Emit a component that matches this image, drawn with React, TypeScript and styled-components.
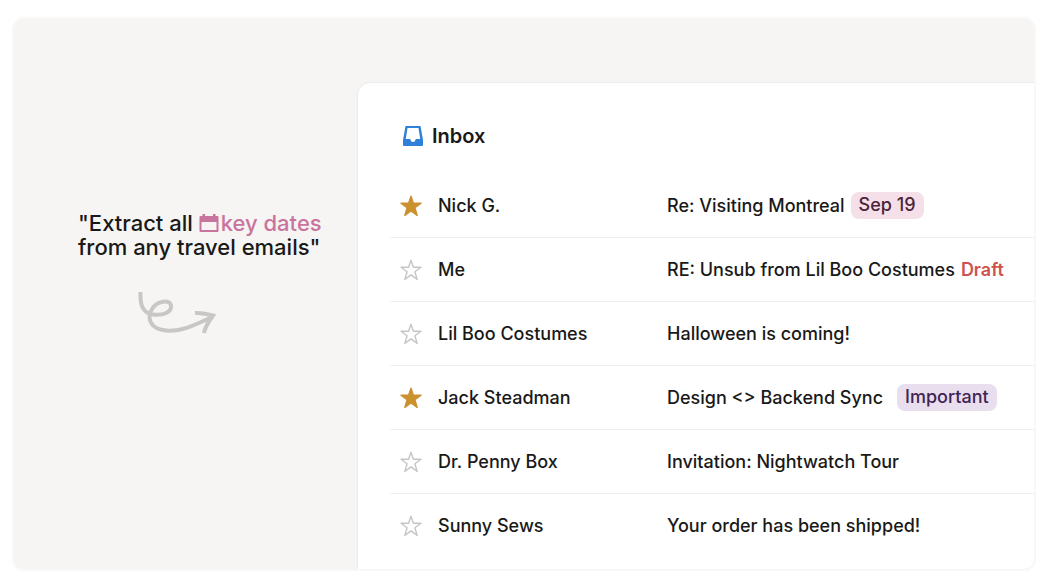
import React, { useState } from "react";
import styled, { createGlobalStyle } from "styled-components";

const GlobalStyle = createGlobalStyle`
  * { box-sizing: border-box; }
  body {
    margin: 0;
    background: #fff;
    color: #191918;
    font-family: Inter, "Liberation Sans", sans-serif;
  }
`;

const Page = styled.main`
  padding: 17px 14px 15px 12px;
`;

const Stage = styled.section`
  display: flex;
  border: 2px solid #f8f8f7;
  border-radius: 12px;
  background: #f6f5f4;
  overflow: hidden;
`;

const Aside = styled.div`
  flex: 0 0 344px;
  padding: 192px 0 0 64px;
`;

const Prompt = styled.p`
  margin: 0;
  font-size: 22px;
  line-height: 24px;
  font-weight: 500;
  white-space: nowrap;
`;

const KeyPhrase = styled.span`
  color: #c9749c;
`;

const CalendarIcon = styled.svg`
  width: 20px;
  height: 20px;
  margin-right: 2px;
  vertical-align: -2px;
`;

const Arrow = styled.svg`
  display: block;
  width: 84px;
  height: 48px;
  margin: 29px 0 0 56px;
`;

const Mailbox = styled.section`
  flex: 1;
  min-width: 0;
  margin-top: 64px;
  padding: 38px 0 12px 32px;
  border-radius: 12px 0 0 0;
  background: #fff;
  box-shadow: 0 0 2px rgba(0, 0, 0, 0.12);
`;

const Heading = styled.h2`
  display: flex;
  align-items: center;
  gap: 9px;
  margin: 0 0 22px;
  padding-left: 13px;
  font-size: 20px;
  line-height: 30px;
  font-weight: 600;
`;

const MailList = styled.ul`
  margin: 0;
  padding: 0;
  list-style: none;
`;

const MailRow = styled.li`
  display: grid;
  grid-template-columns: 48px 229px 1fr;
  align-items: center;
  height: 64px;
  border-top: 1px solid transparent;
  font-size: 18px;
  line-height: 27px;
  font-weight: 500;
  white-space: nowrap;

  & + & {
    border-top-color: #efefee;
  }
`;

const StarButton = styled.button`
  display: flex;
  width: 24px;
  height: 24px;
  margin-left: 9px;
  padding: 0;
  border: 0;
  background: none;
  cursor: pointer;
`;

const Subject = styled.div<{ $gap: number }>`
  display: flex;
  align-items: center;
  gap: ${(p) => p.$gap}px;
`;

const tones = {
  pink: { color: "#4c2337", background: "#f5e0e9" },
  purple: { color: "#412454", background: "#e8deee" },
};

const Tag = styled.span<{ $tone: keyof typeof tones }>`
  padding: 0 8px 2px;
  border-radius: 8px;
  line-height: 25px;
  color: ${(p) => tones[p.$tone].color};
  background: ${(p) => tones[p.$tone].background};
`;

const Draft = styled.span`
  color: #cd5350;
  font-weight: 600;
`;

type Mail = {
  from: string;
  subject: string;
  starred?: boolean;
  draft?: boolean;
  tag?: { label: string; tone: keyof typeof tones };
};

const mails: Mail[] = [
  { from: "Nick G.", subject: "Re: Visiting Montreal", starred: true, tag: { label: "Sep 19", tone: "pink" } },
  { from: "Me", subject: "RE: Unsub from Lil Boo Costumes", draft: true },
  { from: "Lil Boo Costumes", subject: "Halloween is coming!" },
  { from: "Jack Steadman", subject: "Design <> Backend Sync", starred: true, tag: { label: "Important", tone: "purple" } },
  { from: "Dr. Penny Box", subject: "Invitation: Nightwatch Tour" },
  { from: "Sunny Sews", subject: "Your order has been shipped!" },
];

function Star({ from, initial }: { from: string; initial: boolean }) {
  const [on, setOn] = useState(initial);
  return (
    <StarButton type="button" aria-label={`Star ${from}`} aria-pressed={on} onClick={() => setOn(!on)}>
      <svg width="24" height="24" viewBox="0 0 24 24" aria-hidden="true">
        <path
          d="M12 2.2 14.4 9.3H22L15.9 13.8 18.2 21.4 12 16.9 5.8 21.4 8.1 13.8 2 9.3H9.6Z"
          fill={on ? "#cb912f" : "none"}
          stroke={on ? "#cb912f" : "#c6c6c4"}
          strokeWidth="1.4"
          strokeLinejoin="round"
        />
      </svg>
    </StarButton>
  );
}

export default function App() {
  return (
    <Page>
      <GlobalStyle />
      <Stage>
        <Aside>
          <Prompt>
            "Extract all{" "}
            <KeyPhrase>
              <CalendarIcon viewBox="0 0 20 20" aria-hidden="true">
                <path
                  fill="currentColor"
                  fillRule="evenodd"
                  d="M3.500 1h2.500v2h8V1h2.500v2h2q1 0 1 1v14q0 1-1 1H1.500q-1 0-1-1V4q0-1 1-1h2ZM2.500 9v8h15V9Z"
                />
              </CalendarIcon>
              key dates
            </KeyPhrase>
            <br />
            from any travel emails"
          </Prompt>
          <Arrow viewBox="0 0 84 48" fill="none" stroke="#c8c7c5" strokeWidth="4" aria-hidden="true">
            <path d="M6.500 4C6 16 8 25 19 26.500C29 28 38 24 37 17.500C36 11 23 13 18 21C12 31 17 41 32 42.500C48 44 63 36 79 28.500" />
            <path d="M61 25C68 24.500 74 26 79 27.500C75 33 71 39 70 45" />
          </Arrow>
        </Aside>
        <Mailbox>
          <Heading>
            <svg width="20" height="20" viewBox="0 0 20 20" aria-hidden="true">
              <path
                fill="#2f80d8"
                fillRule="evenodd"
                d="M2.500 0H17.500L20 14V19Q20 20 19 20H1Q0 20 0 19V14ZM4.500 2 2.800 13H6.500Q7.300 13 7.500 13.800 8 16 10 16T12.500 13.800Q12.700 13 13.500 13H17.200L15.500 2Z"
              />
            </svg>
            Inbox
          </Heading>
          <MailList>
            {mails.map((m) => (
              <MailRow key={m.from}>
                <Star from={m.from} initial={!!m.starred} />
                <span>{m.from}</span>
                <Subject $gap={m.tag?.tone === "purple" ? 14 : 6}>
                  <span>{m.subject}</span>
                  {m.tag && <Tag $tone={m.tag.tone}>{m.tag.label}</Tag>}
                  {m.draft && <Draft>Draft</Draft>}
                </Subject>
              </MailRow>
            ))}
          </MailList>
        </Mailbox>
      </Stage>
    </Page>
  );
}
